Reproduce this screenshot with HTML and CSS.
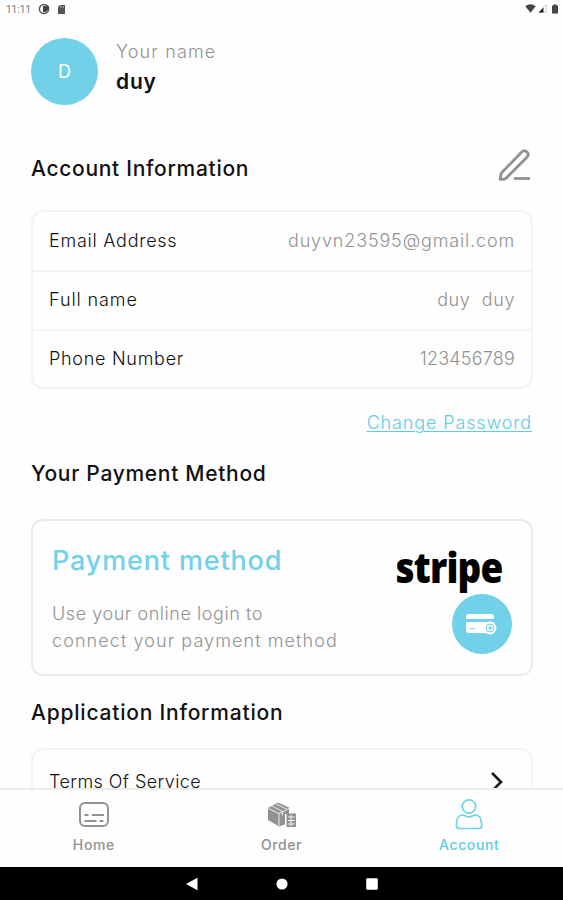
FILE: index.html
```html
<!DOCTYPE html>
<html lang="en">
<head>
  <meta charset="UTF-8" />
  <meta name="viewport" content="width=device-width, initial-scale=1.0" />
  <title>Account</title>
  <link rel="stylesheet" href="styles.css">
</head>
<body>
  <div class="screen">
    <div class="statusbar">
      <span class="clock">11:11</span>
      <svg class="status-app" width="12" height="12" viewBox="0 0 12 12">
        <circle cx="6" cy="6" r="4.6" fill="#fff" stroke="#555" stroke-width="1.5" />
        <path d="M5 3h6v3L8 9H5z" fill="#444" />
      </svg>
      <svg class="status-card" width="9" height="11" viewBox="0 0 9 11">
        <path d="M3 1h5v9H1V3z" fill="#555" />
        <path d="M3.5 2v2M5 2v2M6.5 2v2" stroke="#bbb" stroke-width=".6" />
      </svg>
      <div class="status-right">
        <svg width="11" height="9" viewBox="0 0 11 9"><path d="M.3 2.2Q5.5-1.5 10.7 2.2L5.5 8.7z" fill="#444" /></svg>
        <svg width="9" height="9" viewBox="0 0 9 9"><path d="M.7 8.3 8.2.8v7.5z" fill="#fff" stroke="#bbb" stroke-width=".7" /><path d="M.5 8.5 5.500 3.500v5z" fill="#222" /></svg>
        <svg class="battery" width="6" height="10" viewBox="0 0 6 10"><path d="M1.500.5h3v1H6v8H0v-8h1.500z" fill="#444" /></svg>
      </div>
    </div>

    <main class="content">
      <header class="profile">
        <div class="avatar">D</div>
        <div>
          <div class="profile-label">Your name</div>
          <div class="profile-name">duy</div>
        </div>
      </header>

      <div class="section-head">
        <h2>Account Information</h2>
        <svg width="34" height="34" viewBox="0 0 34 34" fill="none" stroke="#929292" stroke-width="2.8" stroke-linecap="round" stroke-linejoin="round">
          <path d="M2.2 31.300 3.200 25.200 23.500 4.200Q26.300 1.500 29 4 31.500 6.600 28.900 9.300L8.500 29.800Q6 31.700 2.200 31.300z" />
          <path d="M16 30.500h16" stroke-linecap="butt" />
        </svg>
      </div>

      <div class="card info">
        <div class="row"><span class="k-email">Email Address</span><span class="value v-email">duyvn23595@gmail.com</span></div>
        <div class="row"><span class="k-name">Full name</span><span class="value">duy&nbsp; duy</span></div>
        <div class="row"><span class="k-phone">Phone Number</span><span class="value v-phone">123456789</span></div>
      </div>

      <a class="change" href="#">Change Password</a>

      <h2 class="t-payment">Your Payment Method</h2>
      <div class="card payment">
        <div class="payment-text">
          <h3>Payment method</h3>
          <p>Use your online login to<br><span class="wide">connect your payment method</span></p>
        </div>
        <div class="payment-side">
          <div class="stripe">stripe</div>
          <div class="add-card">
            <svg width="32" height="21" viewBox="0 0 32 21">
              <path d="M3 0h22q3 0 3 3v2H0V3q0-3 3-3z" fill="#fff" />
              <path d="M0 8h28v11H3q-3 0-3-3z" fill="#fff" />
              <path d="M4 14.500h5" stroke="#70d1e8" stroke-width="1" />
              <circle cx="24" cy="14" r="6.500" fill="#fff" />
              <circle cx="24" cy="14" r="4" fill="none" stroke="#70d1e8" stroke-width="1" />
              <path d="M24 11.500v5M21.500 14h5" stroke="#70d1e8" stroke-width="1.2" />
            </svg>
          </div>
        </div>
      </div>

      <h2 class="t-app">Application Information</h2>
      <div class="card app">
        <div class="row">
          <span class="k-terms">Terms Of Service</span>
          <svg class="chevron" width="14" height="22" viewBox="0 0 14 22"><path d="M2 2l9 9-9 9" fill="none" stroke="#111" stroke-width="2.6" /></svg>
        </div>
      </div>
    </main>

    <nav class="tabs">
      <a class="tab" href="#">
        <svg width="32" height="32" viewBox="0 0 32 32" fill="none" stroke="#929292" stroke-width="2">
          <rect x="2" y="5" width="28" height="23" rx="5" />
          <path d="M6.500 17h4M14 17h12M6.500 23h12M21.500 23h4" stroke-width="1.8" />
        </svg>
        <span>Home</span>
      </a>
      <a class="tab" href="#">
        <svg width="32" height="32" viewBox="0 0 32 32">
          <path d="M2 10 12 4.500l11 5V25l-10 3.500L2 22z" fill="#929292" />
          <path d="M2.500 10.500 13 15.500l10-5M13 15.500v12M6 8l10.500 5.500v4M10 6l10.500 5" stroke="#eee" stroke-width="1" fill="none" />
          <path d="M19 16h12v14H19z" fill="#fefefe" />
          <path d="M20.500 15.500H30V29H20.500z" fill="#929292" />
          <path d="M22 19h6.500M22 22.500h6.500M22 26h6.500M25 17v11" stroke="#fff" stroke-width=".9" />
        </svg>
        <span>Order</span>
      </a>
      <a class="tab active" href="#">
        <svg width="32" height="32" viewBox="0 0 32 32" fill="none" stroke="#70d1e8" stroke-width="1.7">
          <circle cx="16" cy="8.500" r="6.700" />
          <path d="M9 17q-4.300.5-5.200 6l-.5 4.500q0 3 3.300 3h18.800q3.300 0 3.300-3l-.5-4.500q-.9-5.500-5.200-6-2 0-3.500 1-3.500 1.800-7 0-1.500-1-3.500-1z" />
        </svg>
        <span>Account</span>
      </a>
    </nav>

    <div class="sysbar">
      <svg width="14" height="14" viewBox="0 0 14 14"><path d="M1 7 12.500.8v12.400z" fill="#fff" /></svg>
      <svg width="14" height="14" viewBox="0 0 14 14"><circle cx="7" cy="7" r="5.600" fill="#fff" /></svg>
      <svg width="14" height="14" viewBox="0 0 14 14"><rect x="1.200" y="1.200" width="11.600" height="11.600" rx="1" fill="#fff" /></svg>
    </div>
  </div>
</body>
</html>
```
FILE: styles.css
```css
* {
  box-sizing: border-box;
}
body {
  margin: 0;
  font-family: Inter, "Liberation Sans", sans-serif;
  background: #fefefe;
  color: #111;
}
h2, h3, p {
  margin: 0;
}
svg {
  display: block;
  flex: none;
}
a {
  text-decoration: none;
}
.screen {
  display: flex;
  flex-direction: column;
  width: 563px;
  height: 900px;
  overflow: hidden;
}

/* Status bar */
.statusbar {
  display: flex;
  align-items: center;
  flex: none;
  height: 18px;
  padding: 0 5px 0 6px;
}
.clock {
  width: 26px;
  font: 10px Roboto, sans-serif;
  color: #777;
}
.status-app {
  margin-left: 6px;
}
.status-card {
  margin-left: 7px;
}
.status-right {
  display: flex;
  gap: 2px;
  margin-left: auto;
}
.battery {
  margin-left: 3px;
}

/* Scrolling content */
.content {
  flex: 1;
  min-height: 0;
  padding: 20px 31px 0;
  overflow: hidden;
}
.profile {
  display: flex;
  gap: 18px;
  height: 67px;
}
.avatar {
  display: flex;
  align-items: center;
  justify-content: center;
  width: 67px;
  height: 67px;
  border-radius: 50%;
  background: #70d1e8;
  color: #fff;
  font-size: 18px;
}
.profile-label {
  height: 28px;
  font-size: 18px;
  font-weight: 300;
  line-height: 28px;
  letter-spacing: 1.15px;
  color: #929292;
}
.profile-name {
  font-size: 21px;
  font-weight: 600;
  line-height: 31px;
  letter-spacing: 0.8px;
}
h2 {
  font-size: 21px;
  font-weight: 500;
  line-height: 30px;
  letter-spacing: 0.7px;
  white-space: nowrap;
}
.section-head {
  display: flex;
  justify-content: space-between;
  height: 62px;
  margin-top: 43px;
}
.section-head h2 {
  margin-top: 6px;
}
.card {
  margin-right: -1px;
  border: 2px solid #f3f3f3;
  border-radius: 12px;
}
.info {
  height: 179px;
}
.row {
  display: flex;
  align-items: center;
  justify-content: space-between;
  height: 58px;
  padding: 0 16px 2px;
  font-size: 18px;
  font-weight: 300;
  letter-spacing: 0.6px;
  white-space: nowrap;
}
.info .row + .row {
  height: 59px;
  border-top: 2px solid #f3f3f3;
}
.value {
  color: #929292;
}
.k-email {
  letter-spacing: 0.75px;
}
.k-name {
  letter-spacing: 0.9px;
}
.k-phone {
  letter-spacing: 0.72px;
}
.k-terms {
  letter-spacing: 0.42px;
}
.v-email {
  letter-spacing: 0.85px;
}
.v-phone {
  letter-spacing: 0.2px;
}
.change {
  display: block;
  width: fit-content;
  margin: 21px 0 0 auto;
  font-size: 18px;
  font-weight: 300;
  line-height: 26px;
  letter-spacing: 0.87px;
  color: #5fcbe4;
  text-decoration: underline;
  text-decoration-thickness: 1px;
  text-underline-offset: 2px;
}
.t-payment {
  margin-top: 23px;
}
.payment {
  display: flex;
  justify-content: space-between;
  height: 157px;
  margin-top: 30px;
  padding: 24px 19px 0;
  border-color: #ebebeb;
}
h3 {
  font-size: 27px;
  font-weight: 500;
  line-height: 32px;
  letter-spacing: 0.85px;
  color: #70d1e8;
  white-space: nowrap;
}
.payment-text p {
  margin-top: 23px;
  font-size: 18px;
  font-weight: 300;
  line-height: 27px;
  letter-spacing: 0.55px;
  color: #929292;
  white-space: nowrap;
}
.payment-text .wide {
  letter-spacing: 1.08px;
}
.payment-side {
  display: flex;
  flex-direction: column;
  align-items: flex-end;
}
.stripe {
  height: 49px;
  margin-right: 10px;
  font-family: "Open Sans", sans-serif;
  font-size: 42px;
  font-weight: 800;
  line-height: 44px;
  letter-spacing: -1px;
  color: #000;
  transform: scaleX(0.88);
  transform-origin: right;
}
.add-card {
  display: flex;
  align-items: center;
  justify-content: center;
  flex: none;
  width: 60px;
  height: 60px;
  border-radius: 50%;
  background: #70d1e8;
}
.t-app {
  margin-top: 22px;
  letter-spacing: 0.79px;
}
.app {
  height: 100px;
  margin-top: 20px;
}
.app .row {
  height: 65px;
}
.chevron {
  margin-right: 11px;
}

/* Bottom navigation */
.tabs {
  display: flex;
  flex: none;
  height: 79px;
  border-top: 2px solid #ececec;
}
.tab {
  display: flex;
  flex: 1;
  flex-direction: column;
  align-items: center;
  padding-top: 8px;
  color: #929292;
  font-size: 14px;
  font-weight: 500;
  line-height: 20px;
  letter-spacing: 0.6px;
}
.tab span {
  margin-top: 5px;
}
.tab.active {
  color: #5fcbe4;
}
.sysbar {
  display: flex;
  align-items: center;
  justify-content: center;
  flex: none;
  gap: 76px;
  height: 33px;
  background: #000;
}
```
